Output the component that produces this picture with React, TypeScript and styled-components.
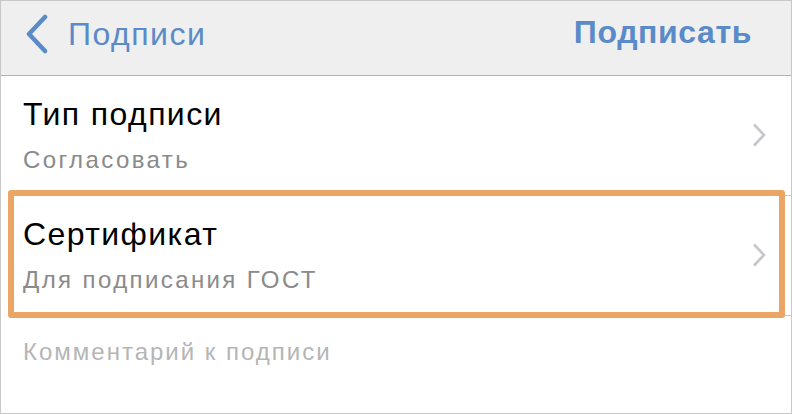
import React from 'react';
import styled, { createGlobalStyle } from 'styled-components';

const GlobalStyle = createGlobalStyle`
  html, body {
    margin: 0;
    padding: 0;
    background: #ffffff;
  }
  * {
    box-sizing: border-box;
  }
`;

const Screen = styled.div`
  width: 792px;
  height: 414px;
  border: 1px solid #c8c8c8;
  background: #ffffff;
  display: flex;
  flex-direction: column;
  overflow: hidden;
  font-family: 'Liberation Sans', Arial, sans-serif;
`;

const NavBar = styled.header`
  height: 75px;
  flex-shrink: 0;
  background: #efefef;
  border-bottom: 1px solid #b2b2b2;
  display: flex;
  align-items: flex-start;
  justify-content: space-between;
  padding: 13px 39px 0 24px;
  color: #5a8ac7;
`;

const BackButton = styled.button`
  display: flex;
  align-items: center;
  gap: 19px;
  background: none;
  border: none;
  padding: 0;
  color: inherit;
  font-family: inherit;
  font-size: 32px;
  line-height: 36px;
  letter-spacing: 1.5px;
  cursor: pointer;
`;

const ActionButton = styled.button`
  background: none;
  border: none;
  padding: 0;
  color: inherit;
  font-family: inherit;
  font-size: 32px;
  line-height: 36px;
  font-weight: 700;
  letter-spacing: 0.6px;
  cursor: pointer;
`;

const List = styled.div`
  display: flex;
  flex-direction: column;
`;

const Row = styled.div`
  position: relative;
  height: 120px;
  flex-shrink: 0;
  display: flex;
  align-items: center;
  justify-content: space-between;
  padding: 0 25px 3px 22px;

  &::after {
    content: '';
    position: absolute;
    left: 22px;
    right: 0;
    bottom: 0;
    height: 1px;
    background: #c8c8c8;
  }
`;

const Highlight = styled.div`
  position: absolute;
  left: 7px;
  right: 6px;
  top: -6px;
  bottom: -2px;
  border: 6px solid #eba564;
  border-radius: 3px;
  z-index: 2;
  pointer-events: none;
`;

const RowText = styled.div`
  display: flex;
  flex-direction: column;
  gap: 14px;
`;

const RowTitle = styled.div`
  font-size: 32px;
  line-height: 36px;
  letter-spacing: 1.4px;
  color: #000000;
`;

const RowValue = styled.div`
  font-size: 24px;
  line-height: 28px;
  letter-spacing: 2.4px;
  color: #8a8a8a;
`;

const Comment = styled.div`
  padding: 22px 22px;
  font-size: 24px;
  line-height: 28px;
  letter-spacing: 2px;
  color: #b5b5b5;
`;

const BackChevron = () => (
  <svg width="24" height="40" viewBox="0 0 24 40">
    <path d="M20 3 L4 20 L20 37" fill="none" stroke="currentColor" strokeWidth="4.5" strokeLinecap="round" strokeLinejoin="round" />
  </svg>
);

const Disclosure = () => (
  <svg width="14" height="24" viewBox="0 0 14 24">
    <path d="M2 1.5 L12 12 L2 22.5" fill="none" stroke="#c7c7cc" strokeWidth="2.6" />
  </svg>
);

const items = [
  { title: 'Тип подписи', value: 'Согласовать', highlight: false },
  { title: 'Сертификат', value: 'Для подписания ГОСТ', highlight: true },
];

const App: React.FC = () => {
  return (
    <>
      <GlobalStyle />
      <Screen>
        <NavBar>
          <BackButton>
            <BackChevron />
            Подписи
          </BackButton>
          <ActionButton>Подписать</ActionButton>
        </NavBar>
        <List>
          {items.map((item) => (
            <Row key={item.title}>
              {item.highlight && <Highlight />}
              <RowText>
                <RowTitle>{item.title}</RowTitle>
                <RowValue>{item.value}</RowValue>
              </RowText>
              <Disclosure />
            </Row>
          ))}
        </List>
        <Comment>Комментарий к подписи</Comment>
      </Screen>
    </>
  );
};

export default App;
